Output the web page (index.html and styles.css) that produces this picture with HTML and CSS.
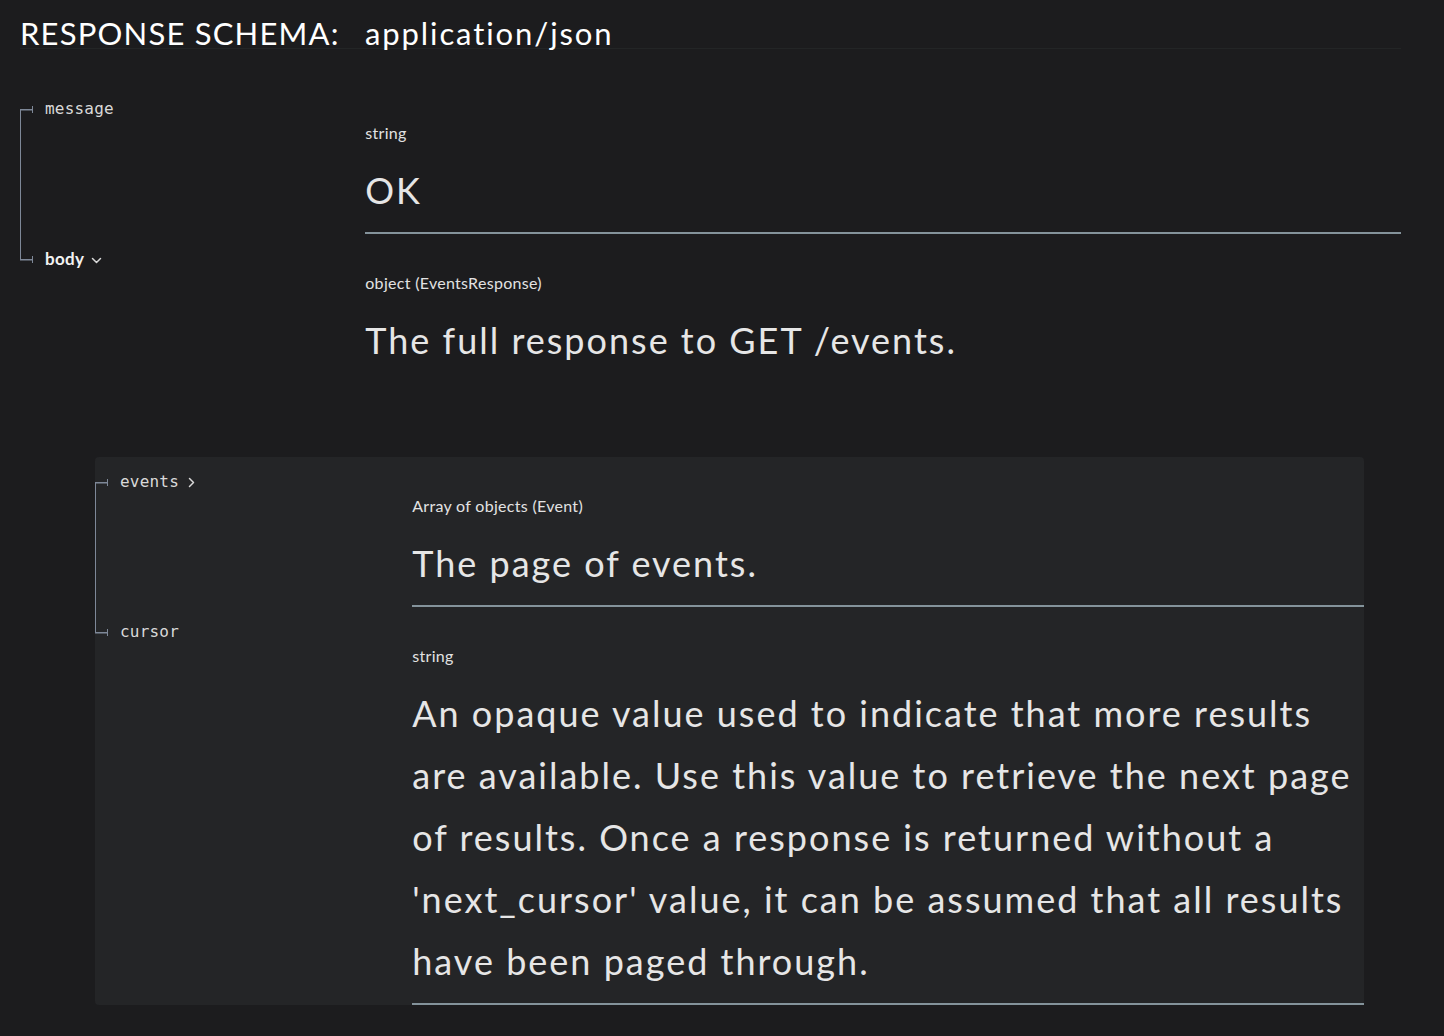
FILE: index.html
```html
<!DOCTYPE html>
<html lang="en">
<head>
<meta charset="utf-8">
<title>Response schema</title>
<link rel="stylesheet" href="styles.css">
</head>
<body>
<div class="schema">
  <header class="schema-head">
    <h2 class="schema-title">RESPONSE SCHEMA:</h2>
    <span class="schema-media">application/json</span>
  </header>

  <div class="props">
    <div class="prop first">
      <div class="prop-name"><span class="bullet"></span><span class="name mono">message</span></div>
      <div class="prop-detail bordered">
        <div class="type">string</div>
        <div class="desc">OK</div>
      </div>
    </div>
    <div class="prop last">
      <div class="prop-name"><span class="bullet"></span><span class="name bold">body</span><svg class="chev chev-down" width="11" height="7" viewBox="0 0 11 7"><path d="M1.5 1.5l4 4 4-4" fill="none" stroke="currentColor" stroke-width="1.5" stroke-linecap="round" stroke-linejoin="round"/></svg></div>
      <div class="prop-detail body-detail">
        <div class="type">object (EventsResponse)</div>
        <div class="desc">The full response to GET /events.</div>
      </div>
    </div>
  </div>

  <div class="nested">
    <div class="props">
      <div class="prop first">
        <div class="prop-name"><span class="bullet"></span><span class="name mono">events</span><svg class="chev chev-right" width="7" height="11" viewBox="0 0 7 11"><path d="M1.5 1.5l4 4-4 4" fill="none" stroke="currentColor" stroke-width="1.5" stroke-linecap="round" stroke-linejoin="round"/></svg></div>
        <div class="prop-detail bordered">
          <div class="type">Array of objects (Event)</div>
          <div class="desc">The page of events.</div>
        </div>
      </div>
      <div class="prop last">
        <div class="prop-name"><span class="bullet"></span><span class="name mono">cursor</span></div>
        <div class="prop-detail bordered">
          <div class="type">string</div>
          <div class="desc">An opaque value used to indicate that more results are available. Use this value to retrieve the next page of results. Once a response is returned without a 'next_cursor' value, it can be assumed that all results have been paged through.</div>
        </div>
      </div>
    </div>
  </div>
</div>
</body>
</html>
```

FILE: styles.css
```css
* { box-sizing: border-box; }

html, body {
  margin: 0;
  padding: 0;
  background: #1c1c1e;
}

body {
  font-family: "Lato", "Noto Sans", sans-serif;
  color: #e6e6e6;
  height: 1036px;
  overflow: hidden;
}

.schema {
  margin-left: 20px;
  width: 1381px;
}

.schema-head {
  display: flex;
  align-items: baseline;
  padding-top: 19px;
  border-bottom: 1px solid #232526;
}

.schema-title {
  margin: 0;
  width: 345px;
  flex: none;
  font-weight: 400;
  font-size: 31px;
  line-height: 29px;
  color: #ffffff;
  letter-spacing: 1.2px;
}

.schema-media {
  font-size: 31px;
  line-height: 29px;
  color: #ffffff;
  letter-spacing: 1.9px;
}

.props {
  display: flex;
  flex-direction: column;
}

.schema > .props {
  margin-top: 35px;
}

.prop {
  display: grid;
  grid-template-columns: 25% 1fr;
}

.prop-name {
  display: flex;
  align-items: flex-start;
  padding-top: 15px;
  background-image: linear-gradient(#7e8898, #7e8898);
  background-repeat: no-repeat;
  background-size: 1px 100%;
  background-position: 0 0;
}

.prop.first .prop-name {
  background-position: 0 25px;
}

.prop.last .prop-name {
  background-size: 1px 26px;
}

.bullet {
  flex: none;
  display: inline-block;
  width: 13px;
  height: 7px;
  margin-top: 7px;
  margin-right: 12px;
  border-right: 1.5px solid #7e8898;
  background-image: linear-gradient(#7e8898, #7e8898);
  background-repeat: no-repeat;
  background-size: 100% 1.5px;
  background-position: 0 3px;
}

.name {
  line-height: 20px;
  color: #d9d9d9;
}

.mono {
  font-family: "DejaVu Sans Mono", "Liberation Mono", monospace;
  font-size: 16px;
  letter-spacing: 0.2px;
}

.bold {
  font-family: "Lato", "Noto Sans", sans-serif;
  font-weight: 700;
  font-size: 17px;
  letter-spacing: 0.3px;
  color: #f2f2f2;
}

.chev {
  flex: none;
  color: #d9d9d9;
}

.chev-down {
  margin-left: 7px;
  margin-top: 8px;
}

.chev-right {
  margin-left: 9px;
  margin-top: 5px;
}

.prop-detail {
  padding-top: 39px;
}

.prop-detail.bordered {
  padding-bottom: 11px;
  border-bottom: 2px solid #84939b;
}

.prop-detail.body-detail {
  padding-bottom: 86px;
}

.type {
  font-size: 16px;
  line-height: 20px;
  letter-spacing: 0.3px;
  color: #e2e2e2;
}

.desc {
  margin-top: 16px;
  font-size: 36px;
  line-height: 62px;
  color: #e6e6e6;
  letter-spacing: 2px;
}

.nested {
  margin-left: 75px;
  margin-right: 37px;
  background: #242527;
  border-radius: 4px;
}
```
